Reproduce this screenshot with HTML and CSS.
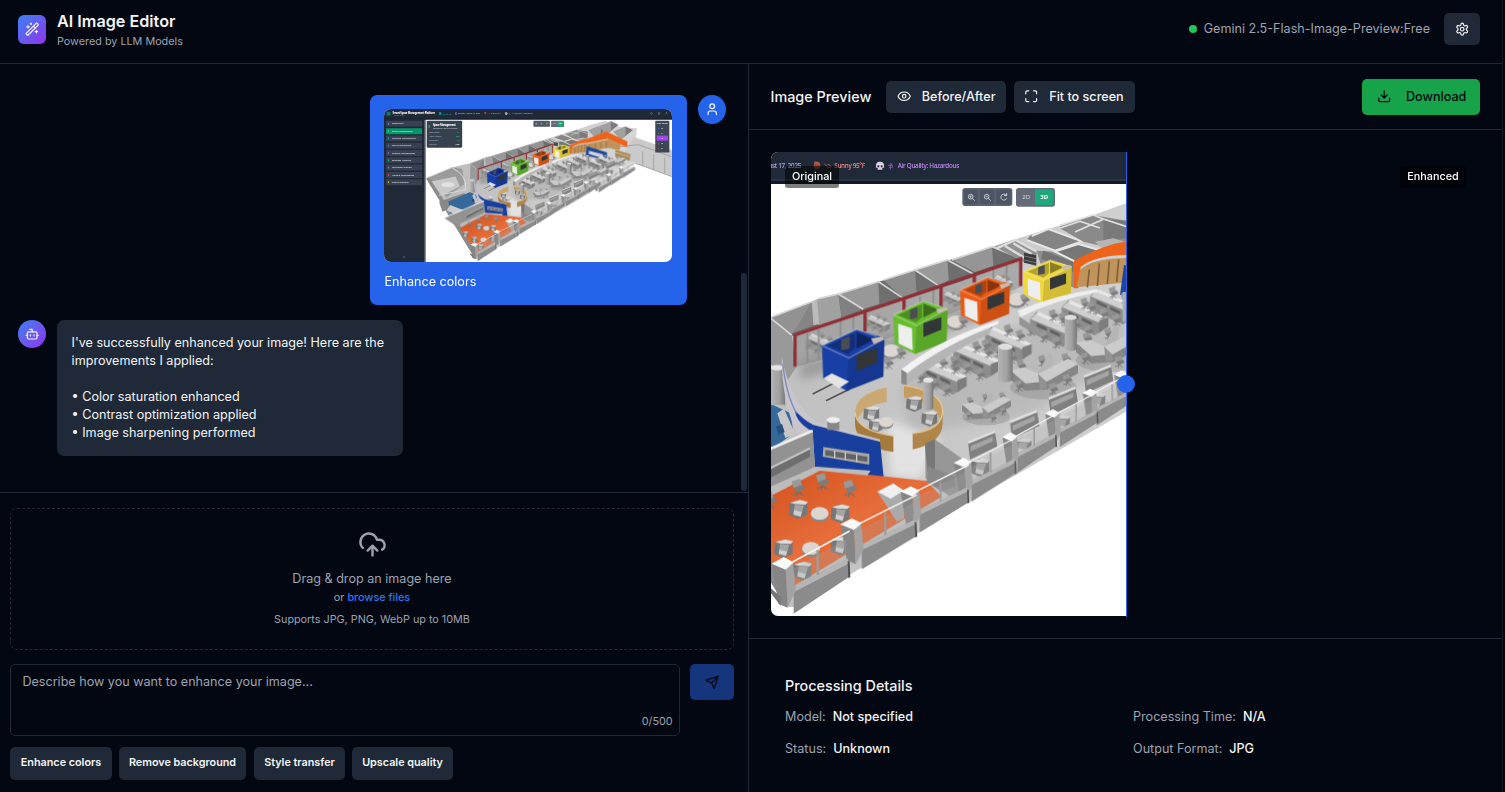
FILE: index.html
```html
<!DOCTYPE html>
<html lang="en">
<head>
<meta charset="utf-8">
<title>AI Image Editor</title>
<link rel="stylesheet" href="styles.css">
</head>
<body>
<svg class="defs" aria-hidden="true">
  <defs>
    <linearGradient id="floor" x1="0" y1="0" x2="1" y2="0"><stop offset="0" stop-color="#b9b9b9"/><stop offset=".5" stop-color="#cbcbcb"/><stop offset="1" stop-color="#dadada"/></linearGradient>
    <linearGradient id="column"><stop offset="0" stop-color="#b4b4b4"/><stop offset=".6" stop-color="#a0a0a0"/><stop offset="1" stop-color="#777"/></linearGradient>
    <linearGradient id="carpet" x1="0" y1="0" x2="1" y2="1"><stop offset="0" stop-color="#cf4c17"/><stop offset=".5" stop-color="#e76d3a"/><stop offset="1" stop-color="#d3541f"/></linearGradient>
    <filter id="soft" x="-20%" y="-20%" width="140%" height="140%"><feGaussianBlur stdDeviation="14"/></filter>

    <!-- square booth: two outer faces, open top -->
    <g id="booth">
      <path d="M0 42 90 0l73 22-3 100-95 37-62-32z" fill="currentColor"/>
      <path d="M14 42 86 10v38L68 64z" fill="currentColor"/><path d="M14 42 86 10v38L68 64z" fill="#000" opacity=".25"/>
      <path d="M90 8l46 18-46 24z" fill="#000" opacity=".42"/>
      <path d="M70 74l93-50-3 98-95 37z" fill="#000" opacity=".12"/>
      <path d="M50 26l22-8v32l-22 4z" fill="#4a4e54"/>
      <path d="M90 66l54-18v38l-54 22z" fill="#333638"/>
      <path d="M0 42 70 74 163 24M0 42 90 0l52 18" fill="none" stroke="#fff" stroke-opacity=".3" stroke-width="4"/>
      <path d="M128 24l30-6 5 8-28 12z" fill="#c5bcb2"/>
    </g>
    <g id="panel"><path d="M14 68l42 14 2 66-42-20z" fill="#eee"/></g>

    <g id="chair"><path d="M0 6 18 0l4 14-18 7z" fill="#989898"/><path d="M4 20 24 13l6 8-18 8z" fill="#7c7c7c"/><path d="M14 28l-4 10m4-10 10 8m-12-6-10 4" stroke="#707070" stroke-width="2.5"/></g>

    <!-- bench workstation -->
    <g id="desk">
      <path d="M0 22 20 0 120 50v44L98 106 0 62z" fill="#8d8d8d"/>
      <path d="M2 22 22 2l112 52-22 14z" fill="#cfcfcf"/>
      <path d="M24 0l114 50-2 10L22 10z" fill="#e6e6e6"/>
      <path d="M112 62l28-10v28L112 98z" fill="#7d7d7d"/>
      <path d="M20 34l30 14v10L20 44zM60 52l30 14v10L60 62z" fill="#626262"/>
      <use href="#chair" x="-10" y="36"/><use href="#chair" x="28" y="56"/><use href="#chair" x="66" y="74"/>
      <use href="#chair" x="56" y="-8"/><use href="#chair" x="92" y="8"/>
    </g>

    <!-- three-armed workstation -->
    <g id="pod">
      <ellipse cx="100" cy="78" rx="100" ry="36" fill="#777" opacity=".3"/>
      <use href="#chair" x="20" y="-6"/><use href="#chair" x="84" y="-20"/><use href="#chair" x="154" y="-26"/>
      <path d="M0 32 44 24 84 44 178 0 204 12v24L112 84 46 88 0 54z" fill="#868686"/>
      <path d="M0 26 42 18 84 36 174-8l30 16-92 52-66 6z" fill="#cbcbcb"/>
      <path d="M84 38 116-26l12 8v34z" fill="#b5b5b5"/><path d="M84 38l6 46 22-4-4-20z" fill="#929292"/>
      <use href="#chair" x="14" y="54"/><use href="#chair" x="116" y="64"/><use href="#chair" x="158" y="36"/>
    </g>

    <g id="seat"><path d="M2 10 30 0l26 8v36L30 56 0 44z" fill="#777"/><path d="M4 8 34 0l24 6-8 8-32-2z" fill="#ddd"/><path d="M18 14 46 16l-6 20-24-6z" fill="#a4a4a4"/><path d="M16 30 40 36l-4 14-22-6z" fill="#d0d0d0"/></g>
    <g id="table"><ellipse cx="28" cy="26" rx="27" ry="20" fill="#888"/><ellipse cx="28" cy="20" rx="27" ry="19" fill="#dcd6d0"/></g>

    <!-- corner post with a run of low wall -->
    <g id="bay">
      <path d="M46 82 210-2l2 48L46 156z" fill="#8b8b8b"/>
      <path d="M46 74 208-10l2 16L46 92z" fill="#b5b5b5"/>
      <path d="M30 8 214-92" stroke="#f4f4f4" stroke-width="5"/>
      <path d="M118-34v74" stroke="#999" stroke-width="7"/>
      <path d="M44 20 204-66v60L46 76z" fill="#aaa" opacity=".25"/>
      <path d="M-18 6 22 20l6 118-28-12z" fill="#858585"/><path d="M22 20 44 2l8 86-24 50z" fill="#a3a3a3"/>
      <path d="M-20 6 16-14 46 2 22 24z" fill="#fafafa"/>
      <path d="M208-2l6 2 2 46-6 4z" fill="#4f4f4f"/>
    </g>

    <g id="room"><path d="M0 46 112 0v78L68 124z" fill="#a0a0a0"/><path d="M112 0 182 34 68 124l44-46z" fill="#7a7a7a"/><path d="M0 46 112 0l70 34" fill="none" stroke="#ddd" stroke-width="5"/></g>

    <g id="plan">
      <path d="M-750-144H1866V1248H-750z" fill="#fff"/>
      <path d="M-368 486-135 389 32 350 155 305 235 282 365 243 570 180 765 118 1000 45 1122 1 1259-35 1395 17 1547 32 1540 120 1865 259V471L1535 350 1098 635 620 910 110 1222 77 1220z" fill="url(#floor)"/>
      <g filter="url(#soft)" opacity=".5"><path d="M120 490 420 400 760 260l-20 60-330 140-290 80z" fill="#777"/><path d="M420 560 760 380l330-90 10 180-300 180-350 50z" fill="#aaa"/><path d="M380 660 540 720 480 840 390 830z" fill="#fff"/></g>

      <!-- far left rooms -->
      <path d="M-368 486-135 389-40 400-20 540-180 660z" fill="#9b9b9b"/>
      <path d="M-340 520-100 470-60 560-220 640z" fill="#c9c9c9"/>
      <ellipse cx="-170" cy="545" rx="60" ry="22" fill="#e0e0e0"/>
      <path d="M-368 486-340 480 110 1170 77 1220z" fill="#8b8b8b"/>
      <path d="M-368 486-135 389Q10 460-10 590L-250 640" fill="none" stroke="#ddd" stroke-width="8"/>
      <path d="M-250 700-20 620 0 690-220 790z" fill="#888"/>
      <path d="M-165 698 33 612 92 640 100 700-20 790-150 800z" fill="#34699a"/>
      <path d="M-150 730-20 780-60 830-180 780z" fill="#ccc"/>
      <path d="M52 640l20-14 34 76-30 12z" fill="#c6c6c8"/><path d="M48 680l18-8 8 24-18 8z" fill="#24507c"/>

      <!-- rear offices -->
      <path d="M33 355 235 282 465 212 696 140 782 178 600 245 430 300 95 408z" fill="#6f6f6f"/>
      <path d="M33 355 155 305v72L95 400z" fill="#929292"/><path d="M33 355 95 405 110 500 70 560 33 490z" fill="#999"/>
      <path d="M155 305 160 375 100 398z" fill="#858585"/><path d="M172 296 235 282 245 355 175 378z" fill="#a1a1a1"/><path d="M155 305l17-9 5 76-17 4z" fill="#bbb"/>
      <path d="M235 282l70 46-60 27z" fill="#808080"/>
      <path d="M235 282 355 245 358 312 305 328z" fill="#989898"/>
      <path d="M370 240 465 212 470 280 430 295z" fill="#8d8d8d"/>
      <path d="M465 212 562 180 566 240 540 256z" fill="#999"/>
      <path d="M575 180 696 140 700 198 645 216z" fill="#959595"/>
      <path d="M33 352 155 305M175 296l60-14 75 46M235 282l120-37 75 50M370 240l95-30 75 50M465 210l97-30 78 42M575 180l121-40 84 34M33 355l62 50" fill="none" stroke="#d6d6d6" stroke-width="5"/>
      <path d="M705 140 765 118 830 155 830 200 782 182z" fill="#919191"/>
      <path d="M710 145l56-25 62 34M735 138l60 36M760 130l55 32" fill="none" stroke="#ddd" stroke-width="7"/>
      <path d="M792 158l36 8v30l-36-8z" fill="#3c3c3c"/><path d="M792 168l36 8m-36 4 36 8" stroke="#777" stroke-width="3"/>
      <path d="M812 105 865 87 965 125 885 150 800 120z" fill="#848484"/><path d="M815 108l50-21 100 37-80 28-85-32" fill="none" stroke="#e5e5e5" stroke-width="6"/>
      <path d="M830 152 890 155 950 185 945 265 850 220z" fill="#8d8d8d"/><path d="M850 152l90 34v30l-96-40z" fill="#737373"/>
      <path d="M885 155 955 132 1035 155 945 184z" fill="#777"/><path d="M885 155l70-23 80 23-90 29z" fill="none" stroke="#e6e6e6" stroke-width="6"/>
      <path d="M900 75 1000 45 1098 62V128L1035 140 970 125 900 85z" fill="#8a8a8a"/>
      <path d="M1030 58v68l68-12V62z" fill="#7a7a7a"/><path d="M900 76l100-31 30 12 68 22M900 84l60-20 60 20" fill="none" stroke="#e0e0e0" stroke-width="5"/><path d="M945 96l85-38" stroke="#e0e0e0" stroke-width="5"/>
      <path d="M1005 125 1060 115 1098 126 1030 150z" fill="#b5b5b5"/>
      <g><use href="#room" x="1105" y="0"/><use href="#room" x="1200" y="-34"/><use href="#room" x="1330" y="12"/></g>
      <path d="M1520 110 1865 230V471L1535 350 1400 300z" fill="#cacaca"/>
      <path d="M1390 200 1560 180 1860 290M1535 350 1865 471M1600 240v130M1700 270v140M1800 300v140" fill="none" stroke="#999" stroke-width="7"/>

      <!-- glazed corridor -->
      <path d="M105 410 782 182v80L600 330 320 440 110 500z" fill="#777" opacity=".4"/>
      <g opacity=".8"><use href="#desk" transform="translate(140 400) scale(.65)"/><use href="#desk" transform="translate(320 345) scale(.5)"/><use href="#desk" transform="translate(550 275) scale(.42)"/><use href="#desk" transform="translate(700 225) scale(.42)"/></g>
      <path d="M142 400v85M176 388v90M242 360v60M280 350v55M480 290v55M520 270v60M640 235v30M700 210v40M740 195v50" stroke="#8c8c8c" stroke-width="5"/>
      <path d="M105 500V405L782 177V258M315 335v60M432 298v35M543 262v56M643 228v20" fill="none" stroke="#8f2f36" stroke-width="10"/>

      <!-- booths -->
      <g><use href="#table" x="365" y="432"/><use href="#chair" x="410" y="440"/><use href="#chair" x="372" y="470"/><use href="#table" x="560" y="345"/><use href="#chair" x="595" y="345"/><use href="#table" x="742" y="278"/><use href="#chair" x="780" y="280"/></g>
      <path d="M158 582 230 545M198 602l70-34" stroke="#555" stroke-width="5"/>
      <use href="#booth" color="#183fa5" transform="translate(186 388) scale(1.15 1.16)"/>
      <path d="M190 535 215 520l52 25-30 20z" fill="#e4e4e4"/>
      <g transform="translate(400 303)" color="#67bd2e"><use href="#booth"/><use href="#panel"/></g>
      <g transform="translate(600 232) scale(.92 .9)" color="#ea5b16"><use href="#booth"/><use href="#panel"/></g>
      <g transform="translate(790 180) scale(.89 .82)" color="#efd83c"><use href="#booth"/><use href="#panel"/></g>

      <!-- orange and timber wing -->
      <path d="M942 265V182Q1040 130 1098 125L1270 60 1460 150V205L1280 125 1098 165Q1010 165 962 200L955 265z" fill="#ee6319"/>
      <path d="M960 210Q1000 175 1088 175L1300 130 1400 180 1390 230 1280 210 1090 248 950 262z" fill="#c0935a"/>
      <path d="M988 208l-6 54M1018 190l-6 68M1048 184l-6 68M1076 178l-6 68M1120 180v60M1170 170v60M1220 160v50M1270 150v60" stroke="#80603a" stroke-width="5"/>
      <path d="M1080 285 1092 195 1275 250V345Q1180 285 1080 285z" fill="#1d479f"/><path d="M1110 235l130 35v35l-130-40z" fill="#d4d4d4"/>
      <path d="M1350 225 1490 270 1480 325 1350 290z" fill="#aa854f"/><path d="M1350 250l130 40" stroke="#ddd" stroke-width="6"/>

      <!-- workstations -->
      <use href="#desk" x="810" y="335"/><use href="#desk" x="905" y="300"/><use href="#desk" x="990" y="267"/><use href="#desk" x="1110" y="310"/><use href="#desk" x="1190" y="280"/>
      <path d="M775 332Q880 285 1012 267v10Q880 300 780 352z" fill="#eee"/><path d="M778 350v24l60 36v-20z" fill="#949494"/>
      <use href="#desk" x="480" y="478"/><use href="#desk" x="580" y="430"/><use href="#desk" x="675" y="380"/>
      <path d="M440 520Q560 430 690 385v15Q560 460 440 556z" fill="#b5b5b5"/><path d="M424 508Q550 410 715 362v10Q560 430 440 520z" fill="#f2f2f2"/><path d="M424 508l16 10v40l-16-8z" fill="#888"/>
      <use href="#pod" x="750" y="484"/><use href="#pod" x="948" y="402"/><use href="#pod" transform="translate(606 594) scale(.72)"/><use href="#pod" transform="translate(1130 390) scale(.8)"/><use href="#pod" transform="translate(1300 300) scale(.7)"/>
      <g><path d="M714 440h44v100q-22 14-44 0z" fill="url(#column)"/><ellipse cx="736" cy="440" rx="22" ry="10" fill="#ddd"/><path d="M914 352h36v96q-18 10-36 0z" fill="url(#column)"/><ellipse cx="932" cy="352" rx="18" ry="8" fill="#ddd"/><path d="M1088 275h26v90h-26z" fill="url(#column)"/></g>

      <!-- round meeting area -->
      <path d="M380 562Q285 582 285 640l4 30Q300 618 380 606z" fill="#cba871"/>
      <path d="M432 556Q548 570 548 640l-4 30Q532 606 432 592z" fill="#c39c60"/>
      <use href="#seat" transform="translate(438 588) scale(.85)"/><use href="#seat" transform="translate(310 618) scale(.85)"/><use href="#seat" transform="translate(484 632) scale(.85)"/><use href="#seat" transform="translate(326 655) scale(.75)"/><use href="#table" transform="translate(356 650) scale(.8)"/>
      <path d="M285 636Q288 692 400 708V756Q285 738 285 670z" fill="#a47a3d"/><path d="M285 636Q288 692 400 708" fill="none" stroke="#e4c795" stroke-width="4"/>
      <path d="M548 632Q548 688 458 700V748Q548 730 548 668z" fill="#b0854a"/><path d="M432 556Q550 575 548 635 545 690 458 700" fill="none" stroke="#e4c795" stroke-width="4"/>
      <path d="M490 540h30v86q-15 10-30 0z" fill="url(#column)"/><ellipse cx="505" cy="540" rx="15" ry="8" fill="#e5e5e5"/>

      <!-- blue lounge wall -->
      <path d="M33 505h38l5 110H33z" fill="url(#column)"/><ellipse cx="52" cy="503" rx="20" ry="8" fill="#e5e5e5"/>
      <path d="M65 470Q95 620 175 668L360 718V728L160 697 110 700Q65 600 65 470z" fill="#c9c5cc"/>
      <path d="M104 630Q130 660 160 675L360 725 372 842 165 802 158 695Q110 670 104 630z" fill="#183f9d"/>
      <path d="M68 490Q80 590 110 640" fill="none" stroke="#7b8cbd" stroke-width="4"/>
      <path d="M190 741 328 762V794L188 770z" fill="#a9a9a9"/><path d="M196 750l126 20v16l-126-20z" fill="#626262"/><path d="M224 752v22m32-18v24m34-18v24" stroke="#ccc" stroke-width="4"/>
      <path d="M202 660v30h36v-30z" fill="#888"/><ellipse cx="220" cy="660" rx="20" ry="9" fill="#eee"/>

      <!-- lounge -->
      <path d="M-59 941 33 880 175 806 332 825 500 843 545 890 470 935 90 1165z" fill="url(#carpet)"/>
      <path d="M-200 850 158 695 165 800 33 870-80 930z" fill="#929292"/><path d="M-200 845 158 692" stroke="#eee" stroke-width="8"/>
      <path d="M0 820 150 745V770L0 850z" fill="#6e6e6e"/><path d="M0 820l150-75" stroke="#c9c9c9" stroke-width="6"/>
      <path d="M-60 900 168 800 332 812 322 826 180 812-50 930z" fill="#bcbcbc"/>
      <use href="#chair" transform="translate(95 836) scale(1.4)"/><use href="#chair" transform="translate(168 818) scale(1.4)"/><use href="#chair" transform="translate(250 838) scale(1.4)"/><use href="#chair" transform="translate(10 874) scale(1.4)"/>
      <use href="#seat" x="86" y="900"/><use href="#seat" x="212" y="913"/><use href="#table" x="151" y="920"/><use href="#seat" x="42" y="1018"/><use href="#table" x="125" y="1025"/><use href="#seat" x="212" y="1010"/><use href="#seat" x="98" y="1085"/><use href="#seat" x="-40" y="970"/>
      <path d="M352 875 400 850 432 872V955L410 965z" fill="#aaa"/><path d="M352 875l48-25 32 22-40 24z" fill="#f0f0f0"/>
      <path d="M495 730 525 718 605 775V870L570 890 497 835z" fill="#969696"/><path d="M495 730l8 85 22-10V718z" fill="#777"/><path d="M505 800l80 30v30l-40 15-45-30z" fill="#888"/>

      <!-- storage along the front -->
      <g id="storage"><path d="M624 728 705 695 712 740 630 778z" fill="#808080"/><path d="M632 738l66-28v14l-66 30z" fill="#a4a4a4"/><path d="M624 728 705 695" stroke="#e2e2e2" stroke-width="7"/><use href="#seat" x="632" y="775"/></g>
      <use href="#storage" x="126" y="-62"/><use href="#storage" x="242" y="-132"/><use href="#storage" x="348" y="-198"/><use href="#storage" x="480" y="-280"/><use href="#storage" x="640" y="-375"/>

      <!-- front wall -->
      <use href="#bay" transform="translate(1395 385) scale(.62)"/><use href="#bay" transform="translate(1280 450) scale(.65)"/><use href="#bay" transform="translate(1170 515) scale(.65)"/><use href="#bay" transform="translate(1075 520) scale(.65)"/><use href="#bay" transform="translate(980 575) scale(.65)"/>
      <use href="#bay" transform="translate(868 637) scale(.68 .67)"/><use href="#bay" transform="translate(740 707) scale(.7 .71)"/><use href="#bay" transform="translate(597 784) scale(.8 .78)"/><use href="#bay" transform="translate(438 870) scale(.88 .82)"/><use href="#bay" transform="translate(260 968) scale(.98 .9)"/><use href="#bay" transform="translate(55 1085)"/>
      <path d="M33 1165 62 1190V1218L33 1180z" fill="#777"/>

      <!-- recorded application chrome -->
      <path d="M-750-144H1866V-48H-750z" fill="#1f2937"/><path d="M-750-60H1866" stroke="#374151" stroke-width="3"/><path d="M-750-57H1866V-48H-750z" fill="#111827"/>
      <path d="M-750-52H-382V1248H-750z" fill="#1f2937"/><path d="M-382-52h9V1248h-9z" fill="#111827"/>
      <g class="shot-text">
        <path d="M-726-120h36v36h-36z" fill="#14746f"/><text x="-672" y="-98" fill="#fff" font-size="25" font-weight="700" textLength="388">Smart Space Management Platform</text>
        <text x="-660" y="-76" fill="#10b981" font-size="14">System Online</text>
        <path d="M-250-114h20v22h-20z" fill="#0e9ab4"/><text x="-220" y="-94" fill="#22b8d8" font-size="19">10:42 AM</text>
        <path d="M-104-114h14v22h-14z" fill="#8166c7"/><text x="-78" y="-96" fill="#c4a5f5" font-size="19" textLength="202">Sunday, August 17, 2025</text>
        <circle cx="171" cy="-103" r="10" fill="#8c4740"/><path d="M164-116l14 3 2 8-18-2z" fill="#b45a3c"/><path d="M193-108q9 5 9 10h10q0-9-10-9" fill="none" stroke="#a84e50" stroke-width="3"/><text x="223" y="-96" fill="#f58b86" font-size="19" textLength="92">Sunny 95°F</text>
        <path d="M348-104a12 11 0 0 1 24 0v7h-5v6h-14v-6h-5z" fill="#ddd4e3"/><circle cx="355" cy="-101" r="3.2" fill="#292638"/><circle cx="365" cy="-101" r="3.2" fill="#292638"/><path d="M384-104h13v6h-10m4-12v19m4-19v6" fill="none" stroke="#7756a5" stroke-width="3"/><text x="413" y="-96" fill="#c68bf5" font-size="19" textLength="185">Air Quality: Hazardous</text>
        <g fill="none" stroke="#8b929d" stroke-width="4"><circle cx="1679" cy="-103" r="9"/><path d="M1742-112h12v18h-12zM1807-94q9-16 18 0"/><circle cx="1816" cy="-111" r="5"/></g>
        <g fill="#374151"><rect x="-732" y="-38" width="328" height="54" rx="8"/><rect x="-732" y="96" width="328" height="54" rx="8"/><rect x="-732" y="163" width="328" height="54" rx="8"/><rect x="-732" y="229" width="328" height="54" rx="8"/><rect x="-732" y="296" width="328" height="54" rx="8"/><rect x="-732" y="362" width="328" height="54" rx="8"/><rect x="-732" y="429" width="328" height="54" rx="8"/><rect x="-732" y="495" width="328" height="54" rx="8"/></g>
        <rect x="-732" y="31" width="328" height="54" rx="8" fill="#059669"/>
        <g fill="#e5e7eb" font-size="20"><text x="-678" y="-4">Dashboard</text><text x="-678" y="65">Space Management</text><text x="-678" y="130">Cleaning Management</text><text x="-678" y="197">User Management</text><text x="-678" y="263">Content Management</text><text x="-678" y="330">Business Analytics</text><text x="-678" y="396">Utilization Analysis</text><text x="-678" y="463">Alerts &amp; Notifications</text><text x="-678" y="529">System Settings</text></g>
        <g stroke-width="9"><path d="M-710-18v16" stroke="#8b7cf6"/><path d="M-710 50v16" stroke="#34d399"/><path d="M-710 115v16" stroke="#06b6d4"/><path d="M-710 182v16" stroke="#3b82f6"/><path d="M-710 248v16" stroke="#a855f7"/><path d="M-710 315v16" stroke="#10b981"/><path d="M-710 381v16" stroke="#8b7cf6"/><path d="M-710 448v16" stroke="#ef4444"/><path d="M-710 514v16" stroke="#eab308"/></g>
        <path d="M-578 1195h20v15h-20z" fill="#4b5563"/>
        <rect x="-362" y="-38" width="322" height="246" rx="10" fill="#364150"/><path d="M-340 2v25" stroke="#10b981" stroke-width="10"/><text x="-306" y="13" fill="#fff" font-size="25" font-weight="700" textLength="208">Space Management</text><text x="-306" y="36" fill="#c5cad2" font-size="16">Interactive Floor Plan Control</text>
        <g fill="#aab1bc" font-size="16"><text x="-340" y="78">Total Spaces</text><text x="-340" y="114">Active Sensors</text><text x="-340" y="150">Occupancy</text><text x="-340" y="186">Last Sync</text></g><g fill="#34d399" font-size="17"><text x="-86" y="78">24</text><text x="-95" y="114">98%</text><text x="-84" y="150">18</text><text x="-100" y="186" fill="#fff">Now</text></g>
        <g><rect x="607" y="-36" width="150" height="54" rx="8" fill="#5b6371"/><rect x="612" y="-31" width="42" height="44" rx="5" fill="#4b5563"/><rect x="659" y="-31" width="44" height="44" rx="5" fill="#4b5563"/><rect x="708" y="-31" width="44" height="44" rx="5" fill="#4b5563"/>
          <g fill="none" stroke="#e1e4e8" stroke-width="2.5"><circle cx="632" cy="-10" r="7"/><path d="M637-5l7 7m-15-12h6m-3-3v6"/><circle cx="680" cy="-10" r="7"/><path d="M685-5l7 7m-15-12h6"/><path d="M739-14a9 9 0 1 0 1 9m0-16v8h-8"/></g>
          <rect x="768" y="-36" width="117" height="56" rx="8" fill="#646b78"/><rect x="825" y="-32" width="55" height="47" rx="5" fill="#20a77b"/><text x="787" y="-3" fill="#c8cdd4" font-size="18">2D</text><text x="841" y="-3" fill="#fff" font-size="18" font-weight="700">3D</text></g>
        <rect x="1714" y="-38" width="128" height="290" rx="8" fill="#3c4655"/><text x="1726" y="-5" fill="#fff" font-size="18">Floor Select</text><rect x="1726" y="98" width="104" height="46" fill="#a344ee"/>
        <g fill="#e5e7eb" font-size="18"><text x="1766" y="40">F5</text><text x="1766" y="86">F4</text><text x="1766" y="130">F3</text><text x="1766" y="178">F2</text><text x="1766" y="224">F1</text></g><g><circle cx="1742" cy="34" r="5" fill="#3b82f6"/><circle cx="1742" cy="80" r="5" fill="#10b981"/><circle cx="1742" cy="172" r="5" fill="#f97316"/><circle cx="1742" cy="218" r="5" fill="#ef4444"/></g>
      </g>
    </g>
  </defs>
</svg>

<div class="app">
  <header class="topbar">
    <div class="logo"><svg class="icon" viewBox="0 0 24 24"><path d="m21.64 3.64-1.28-1.28a1.21 1.21 0 0 0-1.72 0L2.36 18.64a1.21 1.21 0 0 0 0 1.72l1.28 1.28a1.2 1.2 0 0 0 1.72 0L21.64 5.36a1.2 1.2 0 0 0 0-1.72M14 7l3 3M5 6v4M19 14v4M10 2v2M7 8H3M21 16h-4M11 3H9"/></svg></div>
    <div class="brand"><h1>AI Image Editor</h1><p>Powered by LLM Models</p></div>
    <div class="model"><i class="dot"></i><span>Gemini 2.5-Flash-Image-Preview:Free</span></div>
    <button class="settings" aria-label="Settings"><svg class="icon" viewBox="0 0 24 24"><path d="M12.22 2h-.44a2 2 0 0 0-2 2v.18a2 2 0 0 1-1 1.73l-.43.25a2 2 0 0 1-2 0l-.15-.08a2 2 0 0 0-2.73.73l-.22.38a2 2 0 0 0 .73 2.73l.15.1a2 2 0 0 1 1 1.72v.51a2 2 0 0 1-1 1.74l-.15.09a2 2 0 0 0-.73 2.73l.22.38a2 2 0 0 0 2.73.73l.15-.08a2 2 0 0 1 2 0l.43.25a2 2 0 0 1 1 1.73V20a2 2 0 0 0 2 2h.44a2 2 0 0 0 2-2v-.18a2 2 0 0 1 1-1.73l.43-.25a2 2 0 0 1 2 0l.15.08a2 2 0 0 0 2.73-.73l.22-.39a2 2 0 0 0-.73-2.73l-.15-.08a2 2 0 0 1-1-1.74v-.5a2 2 0 0 1 1-1.74l.15-.09a2 2 0 0 0 .73-2.73l-.22-.38a2 2 0 0 0-2.73-.73l-.15.08a2 2 0 0 1-2 0l-.43-.25a2 2 0 0 1-1-1.73V4a2 2 0 0 0-2-2z"/><circle cx="12" cy="12" r="3"/></svg></button>
  </header>

  <main class="panes">
    <section class="chat">
      <div class="messages">
        <div class="message user">
          <div class="bubble">
            <svg class="thumb" viewBox="-750 -144 2616 1392" preserveAspectRatio="none"><use href="#plan"/></svg>
            <p>Enhance colors</p>
          </div>
          <div class="avatar"><svg class="icon" viewBox="0 0 24 24"><path d="M19 21v-2a4 4 0 0 0-4-4H9a4 4 0 0 0-4 4v2"/><circle cx="12" cy="7" r="4"/></svg></div>
        </div>
        <div class="message bot">
          <div class="avatar"><svg class="icon" viewBox="0 0 24 24"><path d="M12 8V4H8"/><rect width="16" height="12" x="4" y="8" rx="2"/><path d="M2 14h2M20 14h2M15 13v2M9 13v2"/></svg></div>
          <div class="bubble"><p>I've successfully enhanced your image! Here are the improvements I applied:

• Color saturation enhanced
• Contrast optimization applied
• Image sharpening performed</p></div>
        </div>
        <i class="scroll-thumb"></i>
      </div>
      <div class="composer">
        <div class="dropzone">
          <svg class="icon" viewBox="0 0 24 24"><path d="M12 13v8M4 14.899A7 7 0 1 1 15.71 8h1.79a4.5 4.5 0 0 1 2.5 8.242M8 17l4-4 4 4"/></svg>
          <p class="drop-title">Drag &amp; drop an image here</p>
          <p class="drop-browse">or <a>browse files</a></p>
          <p class="drop-hint">Supports JPG, PNG, WebP up to 10MB</p>
        </div>
        <div class="prompt-row">
          <div class="prompt"><span>Describe how you want to enhance your image...</span><small>0/500</small></div>
          <button class="send" aria-label="Send"><svg class="icon" viewBox="0 0 24 24"><path d="M14.536 21.686a.5.5 0 0 0 .937-.024l6.5-19a.496.496 0 0 0-.635-.635l-19 6.5a.5.5 0 0 0-.024.937l7.93 3.18a2 2 0 0 1 1.112 1.11zM21.854 2.147l-10.94 10.939"/></svg></button>
        </div>
        <div class="chips"><button class="chip-a">Enhance colors</button><button class="chip-b">Remove background</button><button class="chip-c">Style transfer</button><button class="chip-d">Upscale quality</button></div>
      </div>
    </section>

    <section class="preview">
      <div class="toolbar">
        <h2>Image Preview</h2>
        <button class="tool before"><svg class="icon" viewBox="0 0 24 24"><path d="M2.062 12.348a1 1 0 0 1 0-.696 10.75 10.75 0 0 1 19.876 0 1 1 0 0 1 0 .696 10.75 10.75 0 0 1-19.876 0"/><circle cx="12" cy="12" r="3"/></svg><span>Before/After</span></button>
        <button class="tool fit"><svg class="icon" viewBox="0 0 24 24"><path d="M8 3H5a2 2 0 0 0-2 2v3M21 8V5a2 2 0 0 0-2-2h-3M3 16v3a2 2 0 0 0 2 2h3M16 21h3a2 2 0 0 0 2-2v-3"/></svg><span>Fit to screen</span></button>
        <button class="download"><svg class="icon" viewBox="0 0 24 24"><path d="M21 15v4a2 2 0 0 1-2 2H5a2 2 0 0 1-2-2v-4M7 10l5 5 5-5M12 15V3"/></svg><span>Download</span></button>
      </div>
      <div class="stage">
        <div class="compare">
          <svg class="original" viewBox="33 -144 1065 1392" preserveAspectRatio="none"><use href="#plan"/></svg>
          <i class="divider"></i><i class="handle"></i>
          <span class="tag tag-original">Original</span><span class="tag tag-enhanced">Enhanced</span>
        </div>
      </div>
      <div class="details">
        <h2>Processing Details</h2>
        <dl>
          <div><dt>Model:</dt><dd>Not specified</dd></div><div><dt>Processing Time:</dt><dd>N/A</dd></div>
          <div><dt>Status:</dt><dd>Unknown</dd></div><div><dt>Output Format:</dt><dd>JPG</dd></div>
        </dl>
      </div>
    </section>
  </main>
</div>
</body>
</html>
```
FILE: styles.css
```css
:root { font-size: 14.4px; --bg: #030711; --line: #1f2937; --muted: #9ca3af; --text: #f3f4f6; }
* { box-sizing: border-box; }
body { margin: 0; background: var(--bg); color: var(--text); font-family: Inter, sans-serif; overflow: hidden; }
h1, h2, p, dl, dd { margin: 0; font-weight: 400; }
button { border: 0; padding: 0; font: inherit; color: inherit; border-radius: 5px; background: var(--line); display: flex; align-items: center; }
.defs { position: absolute; width: 0; height: 0; }
.icon { width: 14.4px; height: 14.4px; fill: none; stroke: currentColor; stroke-width: 2; stroke-linecap: round; stroke-linejoin: round; flex: none; }
.app { height: 792px; width: 1503px; border-right: 1px solid #10131b; display: flex; flex-direction: column; }

.topbar { height: 64px; border-bottom: 1px solid var(--line); display: flex; align-items: center; padding: 0 22px 5px 18px; flex: none; }
.logo { width: 28px; height: 29px; border-radius: 6px; background: linear-gradient(135deg, #3b82f6, #9333ea); display: grid; place-items: center; margin-right: 11px; }
.brand { flex: 1; padding-top: 2px; }
.brand h1 { font-size: 16.2px; font-weight: 600; line-height: 20px; }
.brand p { font-size: 10.8px; line-height: 14px; color: var(--muted); margin-top: 4px; }
.model { display: flex; align-items: center; gap: 7px; font-size: 12.6px; color: var(--muted); margin-right: 14px; }
.model span { padding-bottom: 2px; }
.dot { width: 8px; height: 8px; border-radius: 50%; background: #22c55e; }
.settings { width: 36px; height: 32px; justify-content: center; }

.panes { flex: 1; display: flex; min-height: 0; }
.chat { width: 749px; border-right: 1px solid var(--line); display: flex; flex-direction: column; flex: none; }
.messages { position: relative; height: 429px; border-bottom: 1px solid var(--line); padding: 31px 22px 0 18px; flex: none; }
.message { display: flex; gap: 11px; align-items: flex-start; }
.message.user { justify-content: flex-end; margin-bottom: 15px; }
.message .bubble { background: var(--line); border-radius: 7px; font-size: 12.6px; line-height: 18px; }
.user .bubble { background: #2563eb; width: 317px; height: 210px; padding: 14px; color: #fff; }
.user .bubble p { padding-left: .5px; }
.thumb { display: block; width: 288px; height: 153px; border-radius: 7px; margin-bottom: 11px; }
.bot .bubble { width: 346px; height: 136px; padding: 14px 14px 14px 14.6px; color: var(--text); white-space: pre-line; }
.avatar { width: 28px; height: 28px; border-radius: 50%; background: #2563eb; display: grid; place-items: center; flex: none; }
.user .avatar { height: 29px; }
.bot .avatar { background: linear-gradient(135deg, #3b82f6, #9333ea); }
.scroll-thumb { position: absolute; right: 1px; top: 209px; width: 6px; height: 218px; border-radius: 3px; background: var(--line); }

.composer { padding: 15px 14px 0 10px; }
.dropzone { height: 142px; border: 1px dashed var(--line); border-radius: 7px; display: flex; flex-direction: column; align-items: center; color: var(--muted); padding-top: 21px; }
.dropzone .icon { width: 29px; height: 29px; }
.drop-title { font-size: 12.6px; line-height: 18px; margin-top: 11px; }
.drop-browse { font-size: 10.8px; line-height: 15px; margin-top: 2px; }
.drop-browse a { color: #2f74f5; font-weight: 500; }
.drop-hint { font-size: 10.8px; line-height: 15px; margin-top: 7px; }
.prompt-row { display: flex; gap: 10px; margin-top: 14px; align-items: flex-start; }
.prompt { flex: 1; height: 72px; border: 1px solid var(--line); border-radius: 5px; color: var(--muted); display: flex; flex-direction: column; justify-content: space-between; padding: 8px 6.4px 6px 11.4px; font-size: 12.6px; line-height: 18px; }
.prompt small { font-size: 10.8px; line-height: 14px; align-self: flex-end; }
.send { width: 44px; height: 36px; background: #15357d; color: #030711; justify-content: center; }
.chips { display: flex; margin-top: 11px; gap: 7px; }
.chips button { height: 33px; font-size: 10.8px; font-weight: 600; justify-content: center; padding-bottom: 3px; }
.chip-a { width: 102px; } .chip-b { width: 127px; } .chips .chip-c { width: 91px; margin-left: 1px; } .chip-d { width: 101px; }

.preview { flex: 1; display: flex; flex-direction: column; min-width: 0; }
.toolbar { height: 66px; border-bottom: 1px solid var(--line); display: flex; align-items: center; padding: 0 22px 0 21.5px; flex: none; }
.toolbar h2 { font-size: 14.4px; font-weight: 500; margin-right: 14.5px; }
.tool { height: 32px; font-size: 12.6px; font-weight: 500; padding-left: 11px; gap: 10.6px; margin-right: 8px; }
.before { width: 120px; } .fit { width: 121px; gap: 11px; padding-left: 10px; }
.download { width: 118px; height: 36px; margin-left: auto; background: #16a34a; color: #030711; font-size: 12.6px; font-weight: 500; padding-left: 15px; gap: 14.6px; }
.stage { height: 509px; border-bottom: 1px solid var(--line); padding: 22px; flex: none; }
.compare { position: relative; width: 710px; height: 465px; border-radius: 7px; }
.original { display: block; width: 355px; height: 464px; border-radius: 7px 0 0 7px; }
.divider { position: absolute; left: 355px; top: 0; width: 1px; height: 465px; background: #2563eb; }
.handle { position: absolute; left: 346px; top: 223px; width: 18px; height: 18px; border-radius: 50%; background: #2563eb; }
.tag { position: absolute; top: 14px; height: 22px; border-radius: 3px; background: rgba(0, 0, 0, .5); color: #fff; font-size: 10.8px; font-weight: 500; line-height: 21px; text-align: center; }
.tag-original { left: 14px; width: 54px; } .tag-enhanced { right: 15px; width: 66px; }
.shot-text { font-family: "Noto Sans", sans-serif; font-weight: 500; }

.details { padding: 37px 22px 0 36px; }
.details h2 { font-size: 14.4px; font-weight: 500; line-height: 20px; }
.details dl { display: grid; grid-template-columns: 348px 1fr; row-gap: 14px; margin-top: 12px; font-size: 12.6px; line-height: 18px; }
.details dl div { display: flex; gap: 7px; }
.details dt { color: var(--muted); } .details dd { font-weight: 500; }
```
